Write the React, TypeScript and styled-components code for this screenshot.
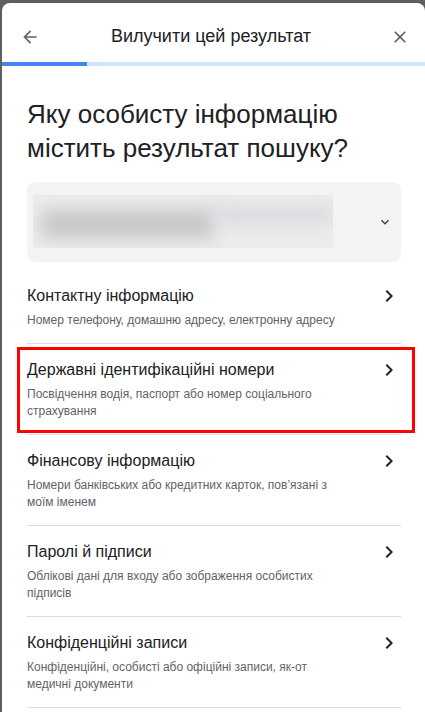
import styled, { createGlobalStyle } from "styled-components"

const GlobalStyle = createGlobalStyle`
html, body {
  margin: 0;
  padding: 0;
  background: #5f5f5f;
}
body {
  font-family: "Liberation Sans", Arial, sans-serif;
  overflow: hidden;
}
`

const items = [
    {
        title: "Контактну інформацію",
        sub: "Номер телефону, домашню адресу, електронну адресу",
    },
    {
        title: "Державні ідентифікаційні номери",
        sub: "Посвідчення водія, паспорт або номер соціального страхування",
        marked: true,
    },
    {
        title: "Фінансову інформацію",
        sub: "Номери банківських або кредитних карток, пов’язані з моїм іменем",
    },
    {
        title: "Паролі й підписи",
        sub: "Облікові дані для входу або зображення особистих підписів",
    },
    {
        title: "Конфіденційні записи",
        sub: "Конфіденційні, особисті або офіційні записи, як-от медичні документи",
    },
]

const App = () => {
    return (
        <>
            <GlobalStyle />
            <Card>
                <Header>
                    <IconButton>
                        <svg width="20" height="20" viewBox="0 0 24 24">
                            <path fill="#5f6368" d="M20 11H7.83l5.59-5.59L12 4l-8 8 8 8 1.41-1.41L7.83 13H20v-2z" />
                        </svg>
                    </IconButton>
                    <HeaderTitle>Вилучити цей результат</HeaderTitle>
                    <IconButton>
                        <svg width="20" height="20" viewBox="0 0 24 24">
                            <path fill="#5f6368" d="M19 6.41L17.59 5 12 10.59 6.41 5 5 6.41 10.59 12 5 17.59 6.41 19 12 13.41 17.59 19 19 17.59 13.41 12z" />
                        </svg>
                    </IconButton>
                </Header>
                <Progress>
                    <ProgressFill />
                </Progress>

                <Body>
                    <Heading>Яку особисту інформацію містить результат пошуку?</Heading>

                    <ResultBox>
                        <Blurred>
                            <Blob w={175} h={30} tone="#c8c9cb" />
                            <Blob w={120} h={18} tone="#dadbde" up />
                        </Blurred>
                        <Space />
                        <svg width="16" height="16" viewBox="0 0 24 24">
                            <path fill="#3c4043" d="M16.59 8.59L12 13.17 7.41 8.59 6 10l6 6 6-6z" />
                        </svg>
                    </ResultBox>

                    <List>
                        {items.map((item) => (
                            <Row key={item.title} marked={item.marked}>
                                <RowText>
                                    <RowTitle>{item.title}</RowTitle>
                                    <RowSub>{item.sub}</RowSub>
                                </RowText>
                                <svg width="24" height="24" viewBox="0 0 24 24">
                                    <path fill="#202124" d="M10 6L8.59 7.41 13.17 12l-4.58 4.59L10 18l6-6z" />
                                </svg>
                            </Row>
                        ))}
                    </List>
                </Body>
            </Card>
        </>
    )
}

export default App

const Card = styled.div`
margin: 3px 0 0 2px;
background: #fff;
border-radius: 8px 8px 0 0;
min-height: 709px;
`

const Header = styled.div`
display: flex;
align-items: center;
height: 51px;
padding: 8px 15px 0 18px;
`

const IconButton = styled.div`
width: 20px;
height: 20px;
display: flex;
align-items: center;
justify-content: center;
`

const HeaderTitle = styled.div`
flex: 1;
text-align: center;
font-size: 18px;
color: #202124;
padding-right: 8px;
`

const Progress = styled.div`
height: 4px;
background: #d2e3fc;
`

const ProgressFill = styled.div`
width: 85px;
height: 100%;
background: #4285f4;
`

const Body = styled.div`
padding: 31px 24px 0 25px;
`

const Heading = styled.h1`
margin: 0 0 17px;
font-size: 26px;
line-height: 34px;
font-weight: 400;
color: #202124;
`

const ResultBox = styled.div`
display: flex;
align-items: center;
height: 80px;
padding: 0 8px 0 6px;
background: #f1f3f4;
border-radius: 8px;
`

const Blurred = styled.div`
width: 300px;
height: 53px;
margin-top: -2px;
background: #ececee;
display: flex;
align-items: center;
overflow: hidden;
padding-left: 8px;
box-sizing: border-box;
`

const Blob = styled.div<{ w: number; h: number; tone: string; up?: boolean }>`
width: ${(p) => p.w}px;
height: ${(p) => p.h}px;
background: ${(p) => p.tone};
filter: blur(8px);
margin-top: ${(p) => (p.up ? "-12px" : "6px")};
`

const Space = styled.div`
flex: 1;
`

const List = styled.div`
margin-top: 8px;
`

const Row = styled.div<{ marked?: boolean }>`
position: relative;
display: flex;
align-items: flex-start;
padding: 14px 0 14px;
border-bottom: 1px solid #dadce0;

svg {
  margin: 0 0 0 12px;
  flex-shrink: 0;
}

${(p) =>
        p.marked &&
        `
&::after {
  content: "";
  position: absolute;
  left: -10px;
  right: -14px;
  top: 3px;
  bottom: 1px;
  border: 3px solid #ff0000;
  pointer-events: none;
}
`}
`

const RowText = styled.div`
flex: 1;
padding-right: 30px;
`

const RowTitle = styled.div`
font-size: 16px;
line-height: 24px;
color: #202124;
`

const RowSub = styled.div`
margin-top: 4px;
font-size: 12px;
line-height: 17px;
color: #5f6368;
`
